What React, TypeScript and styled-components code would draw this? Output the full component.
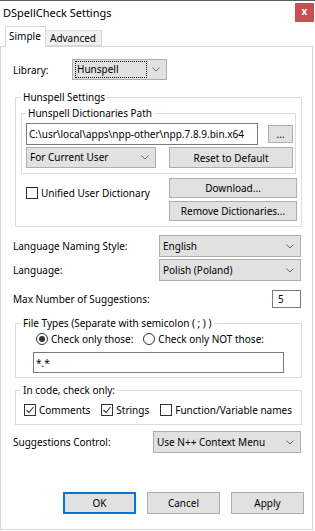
import styled, { createGlobalStyle } from "styled-components";

const GlobalStyle = createGlobalStyle`
    html, body {
        margin: 0;
        padding: 0;
        background: #fff;
    }
    body {
        font-family: "Noto Sans", "Open Sans", sans-serif;
        font-size: 10px;
        color: #000;
    }
`;

const Window = styled.div`
    width: 315px;
    height: 531px;
    box-sizing: border-box;
    border-top: 1px solid #5d5d5d;
    background: #fff;
    display: flex;
    flex-direction: column;
`;

const TitleBar = styled.div`
    height: 25px;
    display: flex;
    align-items: flex-start;
    padding-left: 3px;
`;

const Title = styled.div`
    font-size: 11px;
    line-height: 14px;
    margin-top: 5px;
`;

const CloseButton = styled.div`
    width: 19px;
    height: 19px;
    margin: 2px 1px 0 auto;
    background: #c75050;
    color: #fff;
    font-weight: bold;
    font-size: 10px;
    line-height: 17px;
    text-align: center;
`;

const TabStrip = styled.div`
    height: 21px;
    display: flex;
    align-items: flex-end;
    padding-left: 5px;
    margin-bottom: -1px;
    position: relative;
    z-index: 1;
`;

const Tab = styled.div<{ $active?: boolean }>`
    box-sizing: border-box;
    border: 1px solid #d9d9d9;
    border-bottom: ${p => p.$active ? "none" : "1px solid #d9d9d9"};
    background: ${p => p.$active ? "#fff" : "#f0f0f0"};
    height: ${p => p.$active ? "21px" : "16px"};
    margin-bottom: ${p => p.$active ? "0" : "1px"};
    padding: ${p => p.$active ? "3px 0 0 3px" : "1px 0 0 4px"};
    width: ${p => p.$active ? "41px" : "56px"};
    border-left: ${p => p.$active ? "1px solid #d9d9d9" : "none"};
    line-height: 13px;
`;

const Panel = styled.div`
    width: 313px;
    height: 484px;
    box-sizing: border-box;
    border: 1px solid #d9d9d9;
    padding: 12px 11px 15px 12px;
    display: flex;
    flex-direction: column;
`;

const FieldRow = styled.div<{ $label: number; $gap?: number }>`
    display: grid;
    grid-template-columns: ${p => p.$label}px 1fr;
    align-items: center;
    margin-top: ${p => p.$gap ?? 0}px;
`;

const Label = styled.span`
    line-height: 14px;
    white-space: nowrap;
`;

const DropDown = styled.div<{ $width?: number; $height?: number }>`
    box-sizing: border-box;
    width: ${p => p.$width ? `${p.$width}px` : "100%"};
    height: ${p => p.$height ?? 21}px;
    border: 1px solid #adadad;
    background: #e1e1e1;
    display: flex;
    align-items: center;
    padding: 0 6px 0 3px;
    white-space: nowrap;
`;

const DropText = styled.span<{ $focused?: boolean }>`
    flex: 1;
    line-height: 15px;
    outline: ${p => p.$focused ? "1px dotted #000" : "none"};
    padding-left: ${p => p.$focused ? "1px" : "0"};
`;

const Chevron = () => (
    <svg width="8" height="5" viewBox="0 0 8 5" style={{ marginLeft: 6 }}>
        <polyline points="0.5,0.5 4,4 7.5,0.5" fill="none" stroke="#6a6a6a" strokeWidth="1" />
    </svg>
);

const Select = ({ value, width, height, focused }: { value: string; width?: number; height?: number; focused?: boolean }) => (
    <DropDown $width={width} $height={height}>
        <DropText $focused={focused}>{value}</DropText>
        <Chevron />
    </DropDown>
);

const Group = styled.fieldset<{ $pad: string; $gap?: number }>`
    margin: ${p => p.$gap ?? 0}px -1px 0 2px;
    padding: ${p => p.$pad};
    border: 1px solid #dcdcdc;
    min-width: 0;
`;

const InnerGroup = styled.fieldset`
    margin: 0;
    padding: 0 2px 5px 4px;
    border: 1px solid #dcdcdc;
    min-width: 0;
`;

const Legend = styled.legend<{ $shift?: number }>`
    padding: 0 2px;
    margin-left: ${p => p.$shift ?? 0}px;
    line-height: 16px;
`;

const TextBox = styled.div<{ $width: number; $height: number; $indent?: number }>`
    box-sizing: border-box;
    width: ${p => p.$width}px;
    height: ${p => p.$height}px;
    margin-left: ${p => p.$indent ?? 0}px;
    border: 1px solid #7a7a7a;
    background: #fff;
    padding-left: 2px;
    display: flex;
    align-items: center;
    overflow: hidden;
    white-space: nowrap;
`;

const Button = styled.div<{ $width?: number; $height?: number; $default?: boolean }>`
    box-sizing: border-box;
    width: ${p => p.$width ? `${p.$width}px` : "100%"};
    height: ${p => p.$height ?? 21}px;
    border: ${p => p.$default ? "2px solid #0078d7" : "1px solid #adadad"};
    background: #e1e1e1;
    display: flex;
    align-items: center;
    justify-content: center;
    white-space: nowrap;
`;

const Row = styled.div<{ $gap?: number }>`
    display: flex;
    align-items: center;
    margin-top: ${p => p.$gap ?? 0}px;
`;

const Check = styled.span`
    display: inline-flex;
    align-items: center;
    gap: 3px;
    white-space: nowrap;
    line-height: 14px;
`;

const Box = styled.span`
    box-sizing: border-box;
    width: 12px;
    height: 12px;
    border: 1px solid #333;
    background: #fff;
    display: inline-flex;
    align-items: center;
    justify-content: center;
`;

const Round = styled.span<{ $on?: boolean }>`
    box-sizing: border-box;
    width: 12px;
    height: 12px;
    border-radius: 50%;
    border: 1px solid #333;
    background: #fff;
    display: inline-flex;
    align-items: center;
    justify-content: center;
    &::after {
        content: "";
        width: 6px;
        height: 6px;
        border-radius: 50%;
        background: ${p => p.$on ? "#333" : "transparent"};
    }
`;

const CheckBox = ({ label, checked, indent }: { label: string; checked?: boolean; indent?: number }) => (
    <Check style={indent ? { marginLeft: indent } : undefined}>
        <Box>
            {checked && (
                <svg width="10" height="10" viewBox="0 0 10 10">
                    <polyline points="1.5,5 4,7.5 8.5,2" fill="none" stroke="#333" strokeWidth="1.1" />
                </svg>
            )}
        </Box>
        {label}
    </Check>
);

const Radio = ({ label, on }: { label: string; on?: boolean }) => (
    <Check>
        <Round $on={on} />
        {label}
    </Check>
);

const DictRow = styled.div`
    display: flex;
    align-items: flex-start;
    margin-top: 4px;
`;

const ButtonColumn = styled.div`
    margin-left: auto;
    margin-right: -1px;
    width: 128px;
    display: flex;
    flex-direction: column;
    gap: 3px;
`;

const Footer = styled.div`
    margin-top: auto;
    margin-right: -3px;
    display: flex;
    justify-content: flex-end;
    gap: 11px;
`;

export default function App() {
    return <>
        <GlobalStyle />
        <Window>
            <TitleBar>
                <Title>DSpellCheck Settings</Title>
                <CloseButton>x</CloseButton>
            </TitleBar>
            <TabStrip>
                <Tab $active>Simple</Tab>
                <Tab>Advanced</Tab>
            </TabStrip>
            <Panel>
                <FieldRow $label={59}>
                    <Label>Library:</Label>
                    <Select value="Hunspell" width={95} focused />
                </FieldRow>

                <Group $pad="0 5px 5px 5px" $gap={9}>
                    <Legend>Hunspell Settings</Legend>
                    <InnerGroup>
                        <Legend $shift={0}>Hunspell Dictionaries Path</Legend>
                        <Row $gap={2}>
                            <TextBox $width={233} $height={22}>C:\usr\local\apps\npp-other\npp.7.8.9.bin.x64</TextBox>
                            <Button $width={25} $height={18} style={{ marginLeft: 10 }}>...</Button>
                        </Row>
                        <Row $gap={2}>
                            <Select value="For Current User" width={130} />
                            <Button $width={124} style={{ marginLeft: 13 }}>Reset to Default</Button>
                        </Row>
                    </InnerGroup>
                    <DictRow>
                        <div style={{ marginTop: 8 }}>
                            <CheckBox label="Unified User Dictionary" indent={5} />
                        </div>
                        <ButtonColumn>
                            <Button $height={20}>Download...</Button>
                            <Button $height={20}>Remove Dictionaries...</Button>
                        </ButtonColumn>
                    </DictRow>
                </Group>

                <FieldRow $label={146} $gap={8}>
                    <Label>Language Naming Style:</Label>
                    <Select value="English" height={22} />
                </FieldRow>
                <FieldRow $label={146} $gap={2}>
                    <Label>Language:</Label>
                    <Select value="Polish (Poland)" height={22} />
                </FieldRow>
                <Row $gap={9}>
                    <Label>Max Number of Suggestions:</Label>
                    <TextBox $width={29} $height={18} style={{ marginLeft: "auto", paddingLeft: 5 }}>5</TextBox>
                </Row>

                <Group $pad="0 5px 4px 5px" $gap={7}>
                    <Legend>File Types (Separate with semicolon ( ; ) )</Legend>
                    <Row style={{ height: 16, paddingLeft: 15, gap: 10 }}>
                        <Radio label="Check only those:" on />
                        <Radio label="Check only NOT those:" />
                    </Row>
                    <Row $gap={5}>
                        <TextBox $width={251} $height={21} $indent={12}>*.*</TextBox>
                    </Row>
                </Group>

                <Group $pad="0 5px 6px 5px" $gap={4}>
                    <Legend>In code, check only:</Legend>
                    <Row $gap={4} style={{ height: 16, paddingLeft: 3, gap: 11 }}>
                        <CheckBox label="Comments" checked />
                        <CheckBox label="Strings" checked />
                        <CheckBox label="Function/Variable names" />
                    </Row>
                </Group>

                <FieldRow $label={140} $gap={6}>
                    <Label>Suggestions Control:</Label>
                    <Select value="Use N++ Context Menu" height={22} />
                </FieldRow>

                <Footer>
                    <Button $width={73} $height={22} $default>OK</Button>
                    <Button $width={73} $height={22}>Cancel</Button>
                    <Button $width={73} $height={22}>Apply</Button>
                </Footer>
            </Panel>
        </Window>
    </>;
}
